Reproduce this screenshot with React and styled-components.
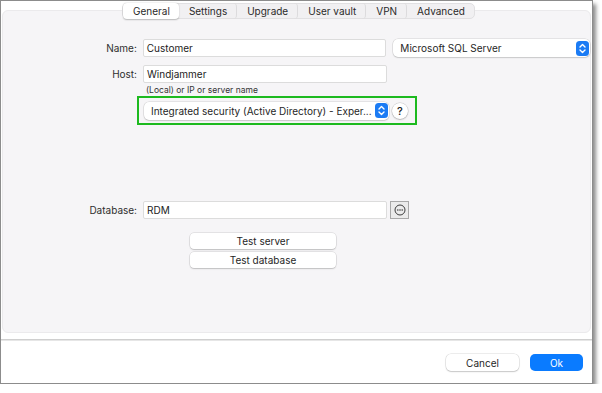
import React from 'react'
import styled, { createGlobalStyle } from 'styled-components';

const GlobalStyle = createGlobalStyle`
  html, body {
    margin: 0;
    padding: 0;
    background: #ffffff;
  }
  body {
    font-family: Inter, "Liberation Sans", sans-serif;
    font-size: 10px;
    color: #262626;
  }
`

const tabs = ['General', 'Settings', 'Upgrade', 'User vault', 'VPN', 'Advanced'];

function Stepper() {
  return (
    <svg width="13" height="15" viewBox="0 0 13 15">
      <rect x="0" y="0" width="13" height="15" rx="3.5" fill="#1b7bf4" />
      <path d="M4 6 L6.5 3.6 L9 6" fill="none" stroke="#fff" strokeWidth="1.4" strokeLinecap="round" strokeLinejoin="round" />
      <path d="M4 9 L6.5 11.4 L9 9" fill="none" stroke="#fff" strokeWidth="1.4" strokeLinecap="round" strokeLinejoin="round" />
    </svg>
  )
}

function MoreIcon() {
  return (
    <svg width="12" height="12" viewBox="0 0 12 12">
      <circle cx="6" cy="6" r="5" fill="none" stroke="#3d3d3d" strokeWidth="1" />
      <circle cx="3.8" cy="6" r="0.8" fill="#3d3d3d" />
      <circle cx="6" cy="6" r="0.8" fill="#3d3d3d" />
      <circle cx="8.2" cy="6" r="0.8" fill="#3d3d3d" />
    </svg>
  )
}

function App() {
  return (
    <>
      <GlobalStyle />
      <Window>
        <Panel>
          <TabBar>
            {tabs.map((t, i) => (
              <Tab key={t} $active={i === 0} $last={i === tabs.length - 1}>{t}</Tab>
            ))}
          </TabBar>

          <Form>
            <Row>
              <Label>Name:</Label>
              <Input $width={244}>Customer</Input>
              <Select $width={197} $ml={7}>
                <span>Microsoft SQL Server</span>
                <Stepper />
              </Select>
            </Row>
            <Row $mt={8}>
              <Label>Host:</Label>
              <Input $width={244}>Windjammer</Input>
            </Row>
            <Hint>(Local) or IP or server name</Hint>
            <Highlight>
              <Select $width={245}>
                <span>Integrated security (Active Directory) - Exper...</span>
                <Stepper />
              </Select>
              <HelpButton>?</HelpButton>
            </Highlight>
            <Row $mt={76}>
              <Label>Database:</Label>
              <Input $width={244}>RDM</Input>
              <IconButton><MoreIcon /></IconButton>
            </Row>
            <ButtonStack>
              <PushButton>Test server</PushButton>
              <PushButton>Test database</PushButton>
            </ButtonStack>
          </Form>
        </Panel>

        <Footer>
          <DialogButton $width={73}>Cancel</DialogButton>
          <DialogButton $width={53} $primary>Ok</DialogButton>
        </Footer>
      </Window>
    </>
  )
}

export default App;

const Window = styled.div`
  width: 591px;
  height: 382px;
  border: 1px solid #8c8c8c;
  background: #ffffff;
  box-shadow: 3px 4px 4px rgba(0, 0, 0, 0.45);
  display: flex;
  flex-direction: column;
`

const Panel = styled.div`
  margin: 9px 1px 0 1px;
  height: 321px;
  background: #f6f5f7;
  border: 1px solid #ebeaec;
  border-radius: 6px;
  display: flex;
  flex-direction: column;
`

const TabBar = styled.div`
  align-self: center;
  margin-top: -8px;
  margin-left: 4px;
  display: flex;
  height: 16px;
  background: #f1f0f2;
  border: 1px solid #e1e0e2;
  border-radius: 5px;
  box-sizing: border-box;
`

const Tab = styled.div`
  display: flex;
  align-items: center;
  padding: 0 9px 0 10px;
  font-size: 10px;
  color: #2a2a2a;
  border-radius: 4px;
  background: ${p => (p.$active ? '#ffffff' : 'transparent')};
  box-shadow: ${p => (p.$active ? '0 0.5px 1.5px rgba(0,0,0,0.25)' : 'none')};
  margin: -1px 0;
  border-right: ${p => (p.$active || p.$last ? 'none' : '1px solid #dcdbdd')};
  height: 16px;
  box-sizing: border-box;
`

const Form = styled.div`
  display: flex;
  flex-direction: column;
  margin-top: 20px;
`

const Row = styled.div`
  display: flex;
  align-items: center;
  height: 18px;
  margin-top: ${p => p.$mt || 0}px;
`

const Label = styled.div`
  width: 134px;
  text-align: right;
  padding-right: 6px;
  color: #2e2e2e;
  font-size: 10px;
`

const Input = styled.div`
  width: ${p => p.$width}px;
  height: 18px;
  box-sizing: border-box;
  background: #ffffff;
  border: 1px solid #dcdcdc;
  border-radius: 2px;
  padding-left: 3px;
  display: flex;
  align-items: center;
  font-size: 10px;
  color: #222;
`

const Select = styled.div`
  width: ${p => p.$width}px;
  margin-left: ${p => p.$ml || 0}px;
  height: 18px;
  box-sizing: border-box;
  background: #ffffff;
  border-radius: 5px;
  box-shadow: 0 0 0 0.5px rgba(0,0,0,0.14), 0 1px 1.5px rgba(0,0,0,0.12);
  display: flex;
  align-items: center;
  justify-content: space-between;
  padding: 0 1px 0 7px;
  font-size: 10px;
  color: #262626;
  span { white-space: nowrap; overflow: hidden; }
`

const Hint = styled.div`
  margin: 2px 0 0 143px;
  height: 10px;
  line-height: 10px;
  font-size: 8.5px;
  color: #333;
`

const Highlight = styled.div`
  margin: 1px 0 0 134px;
  width: 280px;
  height: 29px;
  box-sizing: border-box;
  border: 2.5px solid #1dba1f;
  display: flex;
  align-items: center;
  padding-left: 5px;
  gap: 3px;
`

const HelpButton = styled.div`
  width: 16px;
  height: 16px;
  border-radius: 50%;
  background: #ffffff;
  box-shadow: 0 0 0 0.5px rgba(0,0,0,0.18), 0 1px 1.5px rgba(0,0,0,0.2);
  display: flex;
  align-items: center;
  justify-content: center;
  font-size: 11px;
  font-weight: 500;
  color: #222;
`

const IconButton = styled.div`
  width: 19px;
  height: 18px;
  box-sizing: border-box;
  margin-left: 3px;
  border: 1px solid #a8a8a8;
  background: #ebebeb;
  display: flex;
  align-items: center;
  justify-content: center;
`

const ButtonStack = styled.div`
  margin: 14px 0 0 187px;
  display: flex;
  flex-direction: column;
  gap: 3px;
`

const PushButton = styled.div`
  width: 146px;
  height: 16px;
  background: #ffffff;
  border-radius: 4px;
  box-shadow: 0 0 0 0.5px rgba(0,0,0,0.14), 0 1px 1.5px rgba(0,0,0,0.16);
  display: flex;
  align-items: center;
  justify-content: center;
  font-size: 10px;
  color: #262626;
`

const Footer = styled.div`
  margin-top: 6px;
  border-top: 1px solid #cfcfcf;
  box-shadow: inset 0 1px 0 #e6e6e6;
  display: flex;
  justify-content: flex-end;
  gap: 11px;
  padding: 14px 9px 0 0;
`

const DialogButton = styled.div`
  width: ${p => p.$width}px;
  height: 17px;
  border-radius: 5px;
  display: flex;
  align-items: center;
  justify-content: center;
  font-size: 10px;
  color: ${p => (p.$primary ? '#ffffff' : '#262626')};
  background: ${p => (p.$primary ? '#0a7bff' : '#ffffff')};
  box-shadow: ${p => (p.$primary ? 'none' : '0 0 0 0.5px rgba(0,0,0,0.14), 0 1px 1.5px rgba(0,0,0,0.16)')};
`
